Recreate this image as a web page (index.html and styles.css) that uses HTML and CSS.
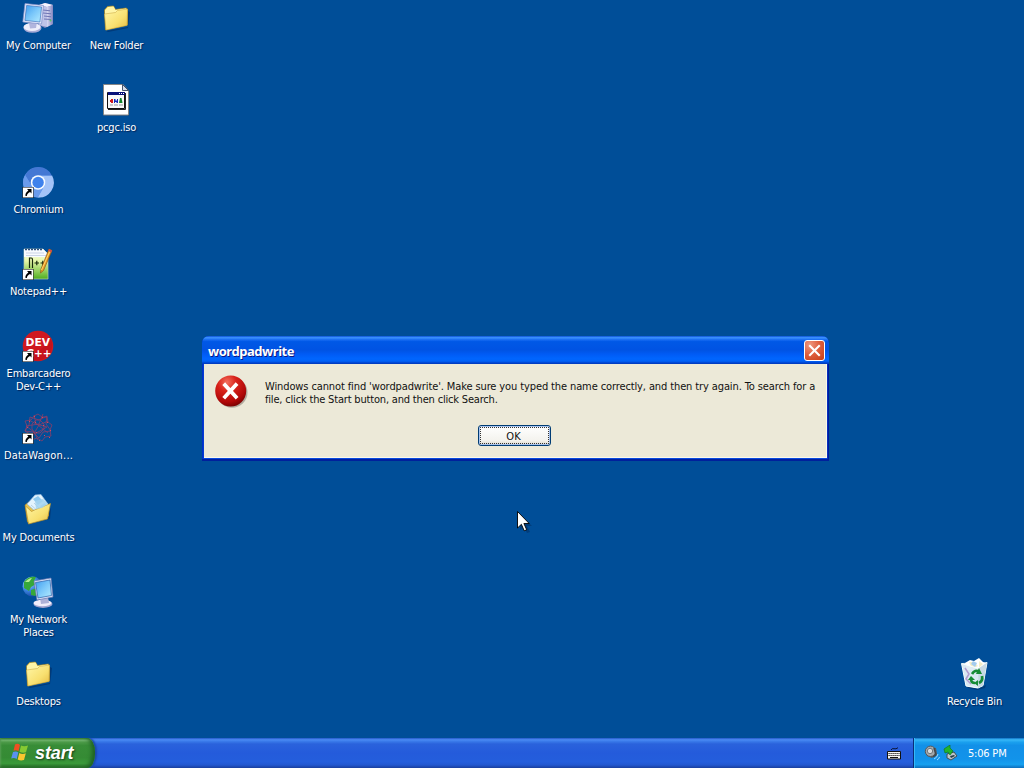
FILE: index.html
```html
<!DOCTYPE html>
<html lang="en">
<head>
<meta charset="utf-8">
<title>Desktop</title>
<link rel="stylesheet" href="styles.css">
</head>
<body>
<svg class="defs" width="0" height="0" aria-hidden="true">
  <defs>
    <linearGradient id="gFolder" x1="0" y1="0" x2="1" y2="1"><stop offset="0" stop-color="#fff7a8"/><stop offset=".6" stop-color="#f8e070"/><stop offset="1" stop-color="#e6bb42"/></linearGradient>
    <linearGradient id="gScreen" x1="0" y1="0" x2="1" y2="1"><stop offset="0" stop-color="#3f9df0"/><stop offset=".5" stop-color="#7cc8fa"/><stop offset="1" stop-color="#b4ecff"/></linearGradient>
    <linearGradient id="gCase" x1="0" y1="0" x2="1" y2="0"><stop offset="0" stop-color="#d9d9f2"/><stop offset="1" stop-color="#8084bf"/></linearGradient>
    <radialGradient id="gGlobe" cx=".3" cy=".3" r=".8"><stop offset="0" stop-color="#b9e6ff"/><stop offset=".5" stop-color="#3a86e0"/><stop offset="1" stop-color="#123a9a"/></radialGradient>
    <radialGradient id="gRed" cx=".38" cy=".22" r=".85"><stop offset="0" stop-color="#f4705e"/><stop offset=".35" stop-color="#d8221a"/><stop offset=".75" stop-color="#b00808"/><stop offset="1" stop-color="#6a0000"/></radialGradient>
    <linearGradient id="gNote" x1="0" y1="0" x2="0" y2="1"><stop offset="0" stop-color="#fff"/><stop offset=".4" stop-color="#e6f7a8"/><stop offset="1" stop-color="#4fae1e"/></linearGradient>
    <symbol id="folder" viewBox="0 0 32 32">
      <path d="M6 29l2 1 20-4 2-16-2-1v16z" fill="#02265a" opacity=".5"/>
      <path d="M4.500 8l3-3.500 6-.500 2 3.500 11-1.500 1 2v15l-22 5z" fill="#eccb55" stroke="#a98a28" stroke-width=".7"/>
      <path d="M5 8l3-3 5.500-.500 2 3.500 10.500-1.500v3L5 13z" fill="#fff5a6"/>
      <path d="M4.500 12l11-1.500 2-2 10-1.500-.500 16.500L6 28z" fill="url(#gFolder)" stroke="#c5a03a" stroke-width=".5"/>
    </symbol>
    <symbol id="shortcut" viewBox="0 0 11 11">
      <path d="M0 0h11v11H0z" fill="#fff" stroke="#000" stroke-width="1"/>
      <path d="M4.500 2h4.500v4.500L7.600 5.100C5.500 6.200 4.500 7.200 4.300 9H3C2.500 7 3.800 4.800 5.900 3.400z" fill="#000"/>
    </symbol>
  </defs>
</svg>

<main class="desktop">
  <div class="item r1 c1">
    <svg class="icon" viewBox="0 0 32 32">
      <path d="M17 3l6-2 8 2v19l-8 4-6-3z" fill="#8085bc"/>
      <path d="M17 3l6-2 8 2-6 2z" fill="#f5f5ff"/><path d="M17 3l8 2v20l-8-2z" fill="#bfc3e8"/><path d="M25 5l6-2v19l-6 3z" fill="url(#gCase)"/>
      <path d="M21 8l7 .8M21 11l8 .8M22 14l7 .8M22 17l7 .5" stroke="#6f75b4" stroke-width="1"/><circle cx="28.500" cy="18.500" r="1" fill="#60c860"/>
      <ellipse cx="10.500" cy="26" rx="9" ry="4.800" fill="#a7abd7"/><ellipse cx="10" cy="25" rx="8.500" ry="4" fill="#eeeefb"/>
      <path d="M7 21l8-1-1 6-6 .5z" fill="#b1b5dd"/>
      <path d="M3 1.500l18.500 2-2 18.500L.800 20z" fill="#e2e7fa" stroke="#7f8ec8" stroke-width=".7"/>
      <path d="M4.600 3.400l15 1.600-1.700 15-15-1.600z" fill="url(#gScreen)" stroke="#3267b4" stroke-width=".6"/>
    </svg>
    <span class="label">My Computer</span>
  </div>
  <div class="item r1 c2"><svg class="icon"><use href="#folder"/></svg><span class="label">New Folder</span></div>
  <div class="item r2 c2">
    <svg class="icon" viewBox="0 0 32 32">
      <path d="M4 .5h19l6 6v25H4z" fill="#02265a" opacity=".6"/>
      <path d="M3.500.500h19.500l5.500 6v24.500h-25z" fill="#fff" stroke="#858585"/>
      <path d="M22.500.500v6h6z" fill="#d3dbe8" stroke="#33445f" stroke-width=".9"/>
      <path d="M7.500 8.500h17v16h-17z" fill="#f8f8f8" stroke="#111"/>
      <path d="M8 8h17v3H8z" fill="#071078"/><path d="M19 9h1v1h-1zM21 9h1v1h-1zM23 9h1v1h-1z" fill="#fff"/><path d="M25.500 9v16.500H8" fill="none" stroke="#222"/>
      <path d="M11 15h2v4h-2zM10 16h1v2h-1z" fill="#d01818"/><path d="M14 15h1.500v1.500H17V15h1v4h-1.500v-1H15v1h-1z" fill="#1428b8"/><path d="M20 14h1.500l1 5H19z" fill="#11852c"/>
      <path d="M10 21h3M14 21h4M19 21h4" stroke="#999"/>
    </svg>
    <span class="label">pcgc.iso</span>
  </div>
  <div class="item r3 c1">
    <svg class="icon" viewBox="0 0 32 32">
      <circle cx="16" cy="16.500" r="15" fill="#5f96ec"/>
      <g transform="translate(.3 .5)">
      <path d="M15.800 9h14A15 15 0 0 1 15.500 31L22 19.500A7 7 0 0 0 15.800 9z" fill="#a3c3f8"/>
      <path d="M2.800 8.500A15 15 0 0 1 29.500 9H15.800A7 7 0 0 0 9.600 19.400z" fill="#4478d4"/>
      <path d="M2.800 8.500A15 15 0 0 0 15.500 31L22 19.500A7 7 0 0 1 9.600 19.500z" fill="#6a9bec"/>
      <circle cx="15.800" cy="16" r="7.300" fill="#f7fbff"/><circle cx="15.800" cy="16" r="5.700" fill="#3f82ec"/>
      </g>
      <use href="#shortcut" x="0.500" y="21" width="11" height="11"/>
    </svg>
    <span class="label">Chromium</span>
  </div>
  <div class="item r4 c1">
    <svg class="icon" viewBox="0 0 32 32">
      <path d="M2 1h19l5 5v25H2z" fill="url(#gNote)" stroke="#b5ccb0" stroke-width=".7"/>
      <path d="M2 1h19l5 5v3H2z" fill="#f8fbff"/>
      <path d="M3 1.500h2m1 0h2m1 0h2m1 0h2m1 0h2m1 0h2" stroke="#31527e" stroke-width="1.500"/>
      <path d="M4 5h18M4 7.500h20" stroke="#b9c4dc" stroke-width=".7"/>
      <path d="M7.500 20V10h1.700q1.300 0 1.300 1.800V20M12.500 15h4.500m-2.200-2.200v4.500M18.500 15h4.500m-2.200-2.200v4.500" fill="none" stroke="#17270c" stroke-width="1.200"/>
      <path d="M27 1l3 1.500-8.500 20-3 2.500.500-4z" fill="#ec9f25" stroke="#8c5517" stroke-width=".7"/>
      <path d="M28 3l-8.500 19" stroke="#ffd56d"/><path d="M27 1l3 1.500-.800 2-3-1.500z" fill="#d84c4c"/>
      <use href="#shortcut" x="0.500" y="21" width="11" height="11"/>
    </svg>
    <span class="label">Notepad++</span>
  </div>
  <div class="item r5 c1">
    <svg class="icon" viewBox="0 0 32 32">
      <circle cx="16" cy="16" r="15.300" fill="#cf1820"/><path d="M27 6A15.300 15.300 0 0 1 8 29L27 12z" fill="#ba0a16" opacity=".4"/>
      <text class="dev-logo" x="3.500" y="15.500" textLength="24.500" lengthAdjust="spacingAndGlyphs">DEV</text>
      <text class="dev-logo" x="4.500" y="26.500" textLength="25" lengthAdjust="spacingAndGlyphs">C++</text>
      <use href="#shortcut" x="0.500" y="21" width="11" height="11"/>
    </svg>
    <span class="label">Embarcadero<br>Dev-C++</span>
  </div>
  <div class="item r6 c1">
    <svg class="icon" viewBox="0 0 32 32">
      <g fill="none" stroke="#a33c62" stroke-width=".8" opacity=".85">
        <path d="M12 4l4-2 4 3 5 0 1 5 4 3-2 5 1 6-6 1-3 4-5-3-5 2-2-6-5-3 2-5-2-5 6-1z"/>
        <path d="M8 5l9 3 8-4-1 8 5 7-8 1-4 6-6-6-8-1 4-6zM12 3l2 9 11 3-9 5-9 4M21 2l-4 10-13 2 8 6 4 8M26 9l-9 4-6 10M7 8l9 5 10 8M14 8l4 0 4 4 0 5-4 4-5 0-3-4 0-5z"/>
      </g>
      <path d="M12 4h1v1h-1zM20 5h1v1h-1zM7 9h1v1h-1zM25 10h1v1h-1zM5 15h1v1h-1zM13 10h1v1h-1zM21 13h1v1h-1zM28 18h1v1h-1zM14 20h1v1h-1zM22 23h1v1h-1zM27 25h1v1h-1zM17 28h1v1h-1z" fill="#d44a59"/>
      <use href="#shortcut" x="0.500" y="21" width="11" height="11"/>
    </svg>
    <span class="label wide">DataWagon...</span>
  </div>
  <div class="item r7 c1">
    <svg class="icon" viewBox="0 0 32 32">
      <path d="M6 30l17-4 6-12-1 11-20 5z" fill="#02265a" opacity=".5"/>
      <path d="M3 11l4-3 5 1 14 3 .5 10-21 6z" fill="#e7c34d" stroke="#ad8425" stroke-width=".7"/>
      <path d="M5 10l8-9 6-.500 8 11-8 11z" fill="#e4f4fe" stroke="#90b9dc" stroke-width=".7"/>
      <path d="M11 5l5-3 5 5-5 4zM18 12l5-3 2 4-5 3z" fill="#8fcaf0"/><path d="M12 9l8 8M9 11l8 7" stroke="#a9c9e3" stroke-width=".8"/>
      <path d="M3.500 12l6 5.500 4-2 15-6-3 15.500-19 5z" fill="url(#gFolder)" stroke="#bc942d" stroke-width=".7"/>
      <path d="M13 7l8-2 5 5-6 4-6 1z" fill="#a4d3f0" opacity=".85"/>
    </svg>
    <span class="label">My Documents</span>
  </div>
  <div class="item r8 c1">
    <svg class="icon" viewBox="0 0 32 32">
      <circle cx="10.500" cy="10.500" r="10" fill="url(#gGlobe)"/><path d="M2 6c3-5 8-6 12-5l-2 4 2 3-5 3-2 4-5-3zM9 14l6-2 3 4-5 4-4-1z" fill="#36a839"/><path d="M3 6q4-4 7-4L7 6z" fill="#b4ed91"/>
      <ellipse cx="21" cy="28" rx="9.500" ry="3.900" fill="#a1a4cf"/><ellipse cx="20.500" cy="27" rx="9" ry="3.300" fill="#f1eefb"/>
      <path d="M18 22l8-1 1 6-8 1z" fill="#aeb2d8"/>
      <path d="M12 5l17-3 2 19-16 3z" fill="#e0e7fa" stroke="#6575b2" stroke-width=".7"/>
      <path d="M13.500 6.500L28 4l1.500 15.500L16 22z" fill="url(#gScreen)" stroke="#285da8" stroke-width=".7"/>
    </svg>
    <span class="label">My Network<br>Places</span>
  </div>
  <div class="item r9 c1"><svg class="icon"><use href="#folder"/></svg><span class="label">Desktops</span></div>
  <div class="item r9 c13">
    <svg class="icon" viewBox="0 0 32 32">
      <path d="M9 28l11 3 8-4-1 3-8 2-9-2z" fill="#02265a" opacity=".5"/>
      <path d="M4 5l25-1-4 24-5 2-12-2z" fill="#c6dbe8"/>
      <path d="M7 5l5-3 4 1 5-3 4 4 3 2-5 6-14 0z" fill="#fff"/><path d="M11 4l5 0 4 4-6 3zM21 3l4 3-4 4z" fill="#f3edc8"/><path d="M15 3l4 2-2 4-4-3z" fill="#a4ccee"/>
      <path d="M3.500 5.500l17 5 8.500-6-4 23-5 2.500-12-2z" fill="#dcebf3" fill-opacity=".88" stroke="#f8ffff"/>
      <path d="M20.500 10.500l8.500-6-4 23-5 2.500z" fill="#c7d9e3"/><path d="M7 10l4 6-3 5 5 5" fill="none" stroke="#b19bcf" stroke-width="1.500"/>
      <g fill="none" stroke="#168b35" stroke-width="2.700"><path d="M14 16q3-5 7-2M24 18q1 5-3 7M17 25q-4 0-4-4"/></g>
      <path d="M21 10l3 6-6 0zM20 22v6l-4-3zM10 22l3-4 4 4z" fill="#168b35"/>
    </svg>
    <span class="label">Recycle Bin</span>
  </div>
</main>

<section class="dialog" role="alertdialog">
  <header class="titlebar">
    <h1 class="title">wordpadwrite</h1>
    <button class="close" aria-label="Close"><svg viewBox="0 0 21 21"><path d="M6 6l9 9M15 6l-9 9" stroke="#fff" stroke-width="2.100" stroke-linecap="square"/></svg></button>
  </header>
  <div class="body">
    <div class="message">
      <svg class="error" viewBox="0 0 34 34"><ellipse cx="17" cy="17.500" rx="15.500" ry="15.300" fill="#6b625a" opacity=".45"/><circle cx="15.700" cy="16" r="15.500" fill="url(#gRed)"/><path d="M10 10L20.800 21.800M20.800 10L10 21.800" stroke="#fff" stroke-width="3.800" stroke-linecap="square"/></svg>
      <p class="text"><span class="line1">Windows cannot find 'wordpadwrite'. Make sure you typed the name correctly, and then try again. To search for a</span><br><span class="line2">file, click the Start button, and then click Search.</span></p>
    </div>
    <button class="ok"><span>OK</span></button>
  </div>
</section>

<svg class="cursor" viewBox="0 0 16 24"><path d="M3 3v16l4-3 3 6 3-1-3-6h5z" fill="#00183b" opacity=".3"/><path d="M.500.500v16.500l3.900-3.700 2.800 6.500 2.500-1-2.800-6.300h5.300z" fill="#fff" stroke="#000" stroke-width=".9"/></svg>

<footer class="taskbar">
  <button class="start">
    <svg class="flag" viewBox="0 0 18 18"><path d="M4 1.500q3-1.500 5 .500L7.500 8.300q-2.500-1.800-5-.500z" fill="#ef4f22"/><path d="M10 2.500q3 1.500 7 0L15 9.200q-3 1.200-6.500-.500z" fill="#86c932"/><path d="M2 9q3-1.400 5.300.500L5.700 16Q3 14.400.200 15.500z" fill="#5a91ee"/><path d="M8.300 10q3 1.700 6.500.300L13 17q-3.500 1.200-6.300-.500z" fill="#fbc72f"/></svg>
    <span class="start-text">start</span>
  </button>
  <div class="tasks">
    <svg class="keyboard" viewBox="0 0 14 13"><path d="M4 3q1-2 3-1.300t4-1" fill="none" stroke="#0c1638" stroke-width="1"/><path d="M.500 4.500h13V12H.500z" fill="#f4f4f4" stroke="#111"/><path d="M1.500 6.500h11M1.500 8.500h11" stroke="#111" stroke-dasharray="1.200 .800" stroke-width="1.200"/><path d="M3 10.500h8" stroke="#111"/></svg>
  </div>
  <div class="tray">
    <svg class="tray-icon" viewBox="0 0 16 16"><path d="M1 6l4-4 7 1 1 6-5 4-5-2z" fill="#585d63"/><circle cx="6.500" cy="6.300" r="5.200" fill="#a3a9ad" stroke="#53585d"/><circle cx="6" cy="6" r="2.700" fill="#d9dddf" stroke="#72777b"/><path d="M10 3l2 7-3 2" fill="none" stroke="#42474c" stroke-width="1.500"/><path d="M10 14q3-1 4-5M13 15q2-1 2.500-3" stroke="#9edbff" fill="none"/></svg>
    <svg class="tray-icon" viewBox="0 0 16 16"><path d="M4 9l7-2 3 4-6 4-4-2z" fill="#bcc6ca" stroke="#434e55"/><path d="M7 11l4-1 1 1-4 2z" fill="#283c46"/><path d="M1 4l6-4 0 3 3 3-3 4-2-3-3 1z" fill="#21b52c" stroke="#117a20" stroke-width=".7"/></svg>
    <time class="clock">5:06 PM</time>
  </div>
</footer>
</body>
</html>
```
FILE: styles.css
```css
* { box-sizing: border-box; }
body {
  margin: 0;
  width: 1024px;
  height: 768px;
  overflow: hidden;
  position: relative;
  display: grid;
  grid-template-rows: 738px 30px;
  background: #004e98;
  font-family: "DejaVu Sans Condensed", "DejaVu Sans", sans-serif;
  font-stretch: condensed;
  font-size: 11px;
}
button { font: inherit; margin: 0; padding: 0; border: 0; }
.defs { position: absolute; }
.desktop {
  display: grid;
  grid-template-columns: repeat(13, 78px);
  grid-template-rows: repeat(9, 82px);
}
.item { display: flex; flex-direction: column; align-items: center; padding: 2px 1px 0 0; }
.icon { width: 32px; height: 32px; flex: none; overflow: visible; }
.item .icon { margin-left: -1px; }
.label {
  margin-top: 5px;
  color: #fff;
  line-height: 13px;
  text-align: center;
  white-space: nowrap;
  letter-spacing: -.18px;
  text-shadow: 1px 1px 1px rgba(0, 20, 65, .75);
}
.wide { letter-spacing: .2px; }
.r1 { grid-row: 1; } .r2 { grid-row: 2; } .r3 { grid-row: 3; }
.r4 { grid-row: 4; } .r5 { grid-row: 5; } .r6 { grid-row: 6; }
.r7 { grid-row: 7; } .r8 { grid-row: 8; } .r9 { grid-row: 9; }
.c1 { grid-column: 1; } .c2 { grid-column: 2; } .c13 { grid-column: 13; }
.dev-logo { font: bold 11px "DejaVu Sans", sans-serif; fill: #fff; }

.dialog {
  position: absolute;
  left: 202px;
  top: 336px;
  width: 627px;
  height: 125px;
  padding: 0 2px 3px;
  border-radius: 7px 7px 0 0;
  background: linear-gradient(90deg, #0030c8 0, #0030c8 1px, #0848e0 2px, #0848e0 625px, #00189c 626px);
  box-shadow: inset 0 -2px #00209c;
}
.titlebar {
  height: 28px;
  margin: 0 -2px;
  padding: 4px 4px 0 6px;
  display: flex;
  justify-content: space-between;
  border-radius: 7px 7px 0 0;
  background: linear-gradient(#0a50d8 0, #3d94ff 6%, #1d72f5 12%, #0058e6 20%, #0053e3 50%, #005bf5 65%, #0066ff 82%, #0060f5 90%, #0043cf 96%, #0038b8 100%);
}
.title {
  margin: 3px 0 0;
  color: #fff;
  font: bold 13px/17px "Noto Sans", sans-serif;
  letter-spacing: -.45px;
  text-shadow: 1px 1px 0 #0a1883;
}
.close {
  width: 21px;
  height: 21px;
  border: 1px solid #fff;
  border-radius: 3px;
  background: radial-gradient(circle at 25% 20%, #ee9880 0, #df6040 45%, #c83c16 100%);
}
.close svg { display: block; width: 21px; height: 21px; margin: -1px; }
.body {
  height: 94px;
  display: flex;
  flex-direction: column;
  align-items: center;
  background: #ece9d8;
  border: solid #fbf8e9;
  border-width: 0 1px 1px 0;
}
.message { align-self: stretch; display: flex; padding: 11px 0 0 11px; height: 61px; }
.error { width: 34px; height: 34px; flex: none; }
.text { margin: 5px 0 0 16px; line-height: 13px; color: #111; white-space: nowrap; }
.line1 { letter-spacing: -.113px; }
.line2 { letter-spacing: -.18px; }
.ok {
  width: 73px;
  height: 21px;
  margin-right: 1px;
  padding: 1px;
  border: 1px solid #003c74;
  border-radius: 3px;
  color: #111;
  background: linear-gradient(#fff, #f4f3ee 75%, #dcd8cc);
  box-shadow: inset 0 0 0 1px #aac4ee;
}
.ok span { display: block; height: 17px; line-height: 17px; border: 1px dotted #333; padding-right: 2px; }
.cursor { position: absolute; left: 517px; top: 511px; width: 16px; height: 24px; }

.taskbar {
  display: grid;
  grid-template-columns: 95px 1fr 111px;
  background: linear-gradient(#2458c8 0, #4b8bf5 6%, #3a7bea 11%, #2a62dc 20%, #245bdb 50%, #245edc 80%, #2257cf 90%, #193f9e 100%);
}
.start {
  display: flex;
  padding: 5px 0 0 11px;
  border-radius: 0 8px 8px 0 / 0 14px 14px 0;
  color: #fff;
  background: linear-gradient(#2d7a2a 0, #77b873 7%, #4c9a48 14%, #388d37 25%, #358b34 65%, #3b9b3b 85%, #2b7429 100%);
  box-shadow: inset -3px -1px 4px #1e6123, inset 1px 0 2px #5aa056, 2px 0 2px #1b4aa8;
}
.flag { width: 18px; height: 18px; }
.start-text {
  margin-left: 6px;
  font: italic bold 18px/20px "Liberation Sans", sans-serif;
  letter-spacing: -.1px;
  text-shadow: 1px 1px 2px #173f18;
}
.tasks { display: flex; justify-content: flex-end; padding: 9px 12px 0 0; }
.keyboard { width: 14px; height: 13px; }
.tray {
  display: flex;
  padding: 7px 0 0 10px;
  border-left: 1px solid #092e78;
  background: linear-gradient(#0f6fc4 0, #38b8f8 6%, #1aa0ee 14%, #1290e8 25%, #1293ea 70%, #16a0f0 88%, #0d6ebc 100%);
  box-shadow: inset 1px 0 #35baf8;
}
.tray-icon { width: 16px; height: 16px; margin-right: 3px; }
.clock { margin: 1px 0 0 6px; color: #fff; line-height: 15px; white-space: nowrap; letter-spacing: -.2px; }
```
